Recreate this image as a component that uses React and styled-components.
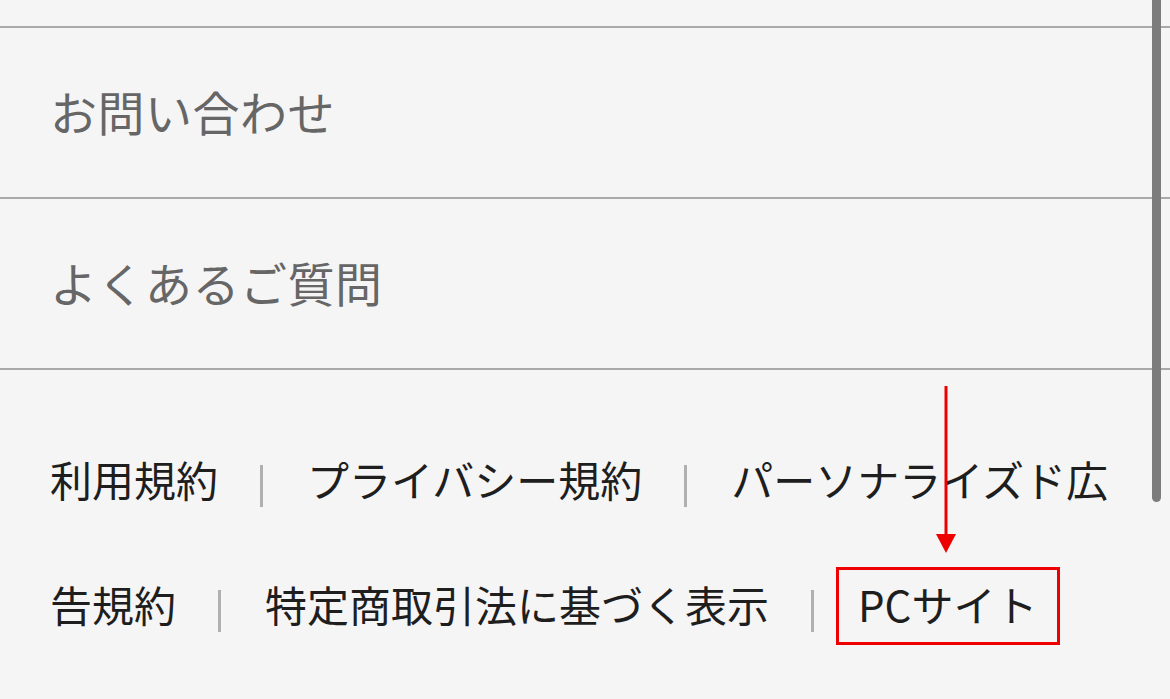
import React from 'react'
import styled, { createGlobalStyle } from 'styled-components'

const GlobalStyle = createGlobalStyle`
  html, body {
    margin: 0;
    padding: 0;
    background: #f5f5f5;
  }
  body {
    font-family: "Noto Sans CJK JP", "Noto Sans", sans-serif;
    overflow: hidden;
  }
`;

const Page = styled.div`
  position: relative;
  width: 1170px;
  height: 699px;
  padding-top: 26px;
  box-sizing: border-box;
  background: #f5f5f5;
  overflow: hidden;
`;

const MenuList = styled.ul`
  list-style: none;
  margin: 0;
  padding: 0;
  border-top: 2px solid #a9a9a9;
`;

const MenuItem = styled.li`
  display: flex;
  align-items: center;
  height: 171px;
  padding: 0 0 5px 50px;
  box-sizing: border-box;
  border-bottom: 2px solid #a9a9a9;
  font-size: 47px;
  color: #666;
  letter-spacing: 0.5px;
`;

const Links = styled.p`
  margin: 0;
  padding: 46px 40px 0 50px;
  font-size: 42px;
  line-height: 125px;
  color: #1e1e1e;
`;

const Sep = styled.span`
  display: inline-block;
  width: 3px;
  height: 42px;
  margin: 0 44px 0 42px;
  vertical-align: middle;
  background: #b0b0b0;
`;

const Marked = styled.span`
  position: relative;

  &::after {
    content: '';
    position: absolute;
    left: -22px;
    right: -23px;
    top: -6px;
    bottom: -11px;
    border: 3px solid #ee0000;
  }
`;

const Arrow = styled.svg`
  position: absolute;
  left: 934px;
  top: 386px;
`;

const Scrollbar = styled.div`
  position: absolute;
  top: 0;
  right: 9px;
  width: 9px;
  height: 502px;
  border-radius: 0 0 5px 5px;
  background: #7c7c7c;
`;

const menu = ['お問い合わせ', 'よくあるご質問'];

const links = [
  'プライバシー規約',
  'パーソナライズド広告規約',
  '特定商取引法に基づく表示',
];

function App() {
  return (
    <>
      <GlobalStyle />
      <Page>
        <MenuList>
          {menu.map((label) => (
            <MenuItem key={label}>{label}</MenuItem>
          ))}
        </MenuList>
        <Links>
          利用規約
          {links.map((label) => (
            <React.Fragment key={label}>
              <Sep />
              {label}
            </React.Fragment>
          ))}
          <Sep />
          <Marked>PCサイト</Marked>
        </Links>
        <Arrow width="24" height="170" viewBox="0 0 24 170">
          <line x1="12" y1="0" x2="12" y2="152" stroke="#ee0000" strokeWidth="3" />
          <polygon points="2,148 22,148 12,167" fill="#ee0000" />
        </Arrow>
        <Scrollbar />
      </Page>
    </>
  );
}

export default App
